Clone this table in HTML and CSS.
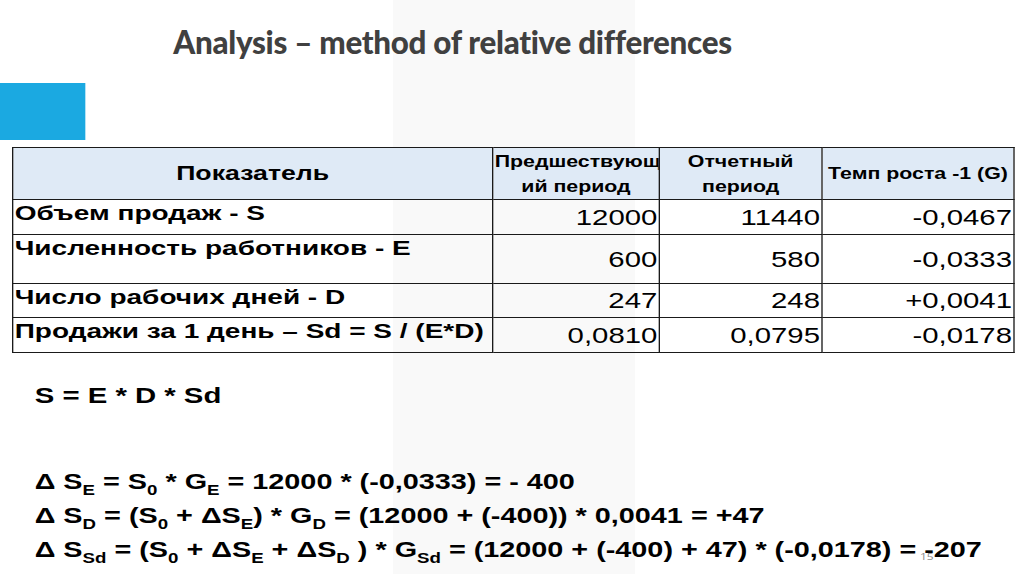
FILE: index.html
```html
<!DOCTYPE html>
<html lang="ru">
<head>
<meta charset="utf-8">
<title>Analysis – method of relative differences</title>
<link rel="stylesheet" href="styles.css">
</head>
<body>
<div class="slide">
  <h1 class="title"><span class="title-text">Analysis – method of relative differences</span></h1>
  <div class="accent"></div>
  <table class="data">
    <colgroup>
      <col class="c1"><col class="c2"><col class="c3"><col class="c4">
    </colgroup>
    <thead>
      <tr class="r-head">
        <th class="h-main">Показатель</th>
        <th>Предшествующ<br>ий период</th>
        <th>Отчетный<br>период</th>
        <th>Темп роста -1 (G)</th>
      </tr>
    </thead>
    <tbody>
      <tr class="r1">
        <td class="label">Объем продаж - S</td>
        <td class="num">12000</td><td class="num">11440</td><td class="num">-0,0467</td>
      </tr>
      <tr class="r2">
        <td class="label">Численность работников - E</td>
        <td class="num">600</td><td class="num">580</td><td class="num">-0,0333</td>
      </tr>
      <tr class="r3">
        <td class="label">Число рабочих дней - D</td>
        <td class="num">247</td><td class="num">248</td><td class="num">+0,0041</td>
      </tr>
      <tr class="r4">
        <td class="label">Продажи за 1 день – Sd = S / (E*D)</td>
        <td class="num">0,0810</td><td class="num">0,0795</td><td class="num">-0,0178</td>
      </tr>
    </tbody>
  </table>
  <div class="formulas">
    <p class="main-eq">S = E * D * Sd</p>
    <div class="deltas">
      <p>Δ S<sub>E</sub> = S<sub>0</sub> * G<sub>E</sub> = 12000 * (-0,0333) = - 400</p>
      <p>Δ S<sub>D</sub> = (S<sub>0</sub> + ΔS<sub>E</sub>) * G<sub>D</sub> = (12000 + (-400)) * 0,0041 = +47</p>
      <p>Δ S<sub>Sd</sub> = (S<sub>0</sub> + ΔS<sub>E</sub> + ΔS<sub>D</sub> ) * G<sub>Sd</sub> = (12000 + (-400) + 47) * (-0,0178) = -207</p>
    </div>
  </div>
  <span class="page-num">15</span>
</div>
</body>
</html>
```

FILE: styles.css
```css
html, body {
  margin: 0;
  padding: 0;
  background: #ffffff;
  overflow: hidden;
}

/* Slide authored at 4:3 (768px) and stretched to the 16:9 window */
.slide {
  position: relative;
  width: 768px;
  height: 574px;
  transform: scaleX(1.33333);
  transform-origin: 0 0;
  background: linear-gradient(to right, #ffffff 0, #ffffff 295px, #f9f9f9 295px, #f9f9f9 476px, #ffffff 476px);
  font-family: "Liberation Sans", Arial, sans-serif;
  color: #000;
}

.title {
  margin: 0;
  height: 83px;
  box-sizing: border-box;
  padding: 23px 0 0 130px;
  font-family: Lato, "Open Sans", sans-serif;
  font-weight: 900;
  font-size: 32px;
  line-height: 38px;
  color: #404040;
  white-space: nowrap;
}

.title-text {
  display: inline-block;
  transform: scaleX(0.735);
  transform-origin: 0 0;
  letter-spacing: -0.3px;
}

.accent {
  width: 64px;
  height: 57px;
  background: #1ba9e1;
}

.data {
  margin: 7px 0 0 9px;
  width: 751px;
  border-collapse: collapse;
  table-layout: fixed;
  border: 1px solid #1a1a1a;
}

.c1 { width: 360px; }
.c2 { width: 125px; }
.c3 { width: 122px; }
.c4 { width: 144px; }

.data th,
.data td {
  border: 1px solid #1a1a1a;
  padding: 0 1px;
  overflow: hidden;
  white-space: nowrap;
}

.data thead th {
  background: #dfeaf6;
  font-weight: 700;
  font-size: 16px;
  line-height: 25px;
  text-align: center;
  vertical-align: middle;
}

.data thead .h-main {
  font-size: 20px;
}

.r-head { height: 52px; }
.r1 { height: 35px; }
.r2 { height: 49px; }
.r3 { height: 34px; }
.r4 { height: 35px; }

.label {
  font-weight: 700;
  font-size: 21px;
  line-height: 25px;
  text-align: left;
  vertical-align: top;
  padding-top: 3px;
}

.num {
  font-size: 22px;
  line-height: 25px;
  text-align: right;
  vertical-align: middle;
  padding-bottom: 4px;
}

.formulas {
  padding-left: 26px;
  font-weight: 700;
  font-size: 21.6px;
}

.formulas p {
  margin: 0;
  white-space: nowrap;
}

.main-eq {
  font-size: 22px;
  padding-top: 30px;
  line-height: 26px;
}

.deltas {
  padding-top: 56px;
}

.deltas p {
  line-height: 34px;
}

.deltas sub {
  font-size: 14px;
  line-height: 0;
  vertical-align: -6px;
}

.page-num {
  position: absolute;
  left: 690px;
  top: 550px;
  font-family: "Open Sans", sans-serif;
  font-size: 9px;
  color: #8a8a8a;
}
```
